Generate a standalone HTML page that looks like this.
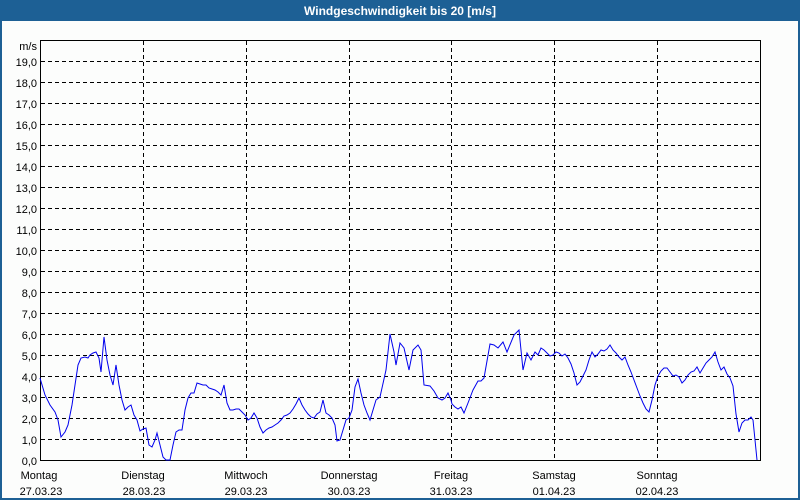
<!DOCTYPE html>
<html><head><meta charset="utf-8"><style>
html,body{margin:0;padding:0;width:800px;height:500px;overflow:hidden;background:#fcfdfc;font-family:"Liberation Sans","DejaVu Sans",sans-serif;}
</style></head><body>
<svg width="800" height="500" xmlns="http://www.w3.org/2000/svg" style="display:block">
<rect x="0" y="0" width="800" height="500" fill="#fcfdfc"/>
<rect x="0" y="0" width="800" height="21" fill="#1d6095"/>
<rect x="0" y="0" width="2" height="500" fill="#1d6095"/>
<rect x="798" y="0" width="2" height="500" fill="#1d6095"/>
<rect x="0" y="498" width="800" height="2" fill="#1d6095"/>
<text x="400" y="15" text-anchor="middle" font-size="12" font-weight="bold" fill="#fff" font-family="Liberation Sans, sans-serif">Windgeschwindigkeit bis 20 [m/s]</text>
<g stroke="#000" stroke-width="1" stroke-dasharray="4,3" shape-rendering="crispEdges">
<path d="M41 61.5H760M41 82.5H760M41 103.5H760M41 124.5H760M41 145.5H760M41 166.5H760M41 187.5H760M41 208.5H760M41 229.5H760M41 250.5H760M41 271.5H760M41 292.5H760M41 313.5H760M41 334.5H760M41 355.5H760M41 376.5H760M41 397.5H760M41 418.5H760M41 439.5H760"/>
<path d="M143.5 41V460M246.5 41V460M349.5 41V460M451.5 41V460M554.5 41V460M657.5 41V460"/>
</g>
<rect x="40.5" y="40.5" width="720" height="420" fill="none" stroke="#000" stroke-width="1" shape-rendering="crispEdges"/>
<g font-size="11" fill="#000" text-anchor="end">
<text x="37" y="50">m/s</text>
<text x="37" y="66">19,0</text><text x="37" y="87">18,0</text><text x="37" y="108">17,0</text><text x="37" y="129">16,0</text><text x="37" y="150">15,0</text><text x="37" y="171">14,0</text><text x="37" y="192">13,0</text><text x="37" y="213">12,0</text><text x="37" y="234">11,0</text><text x="37" y="255">10,0</text><text x="37" y="276">9,0</text><text x="37" y="297">8,0</text><text x="37" y="318">7,0</text><text x="37" y="339">6,0</text><text x="37" y="360">5,0</text><text x="37" y="381">4,0</text><text x="37" y="402">3,0</text><text x="37" y="423">2,0</text><text x="37" y="444">1,0</text><text x="37" y="465">0,0</text>
</g>
<g font-size="11" fill="#000" text-anchor="middle">
<text x="39" y="479">Montag</text><text x="41" y="495">27.03.23</text>
<text x="143" y="479">Dienstag</text><text x="144" y="495">28.03.23</text>
<text x="246" y="479">Mittwoch</text><text x="246" y="495">29.03.23</text>
<text x="349" y="479">Donnerstag</text><text x="349" y="495">30.03.23</text>
<text x="451" y="479">Freitag</text><text x="451" y="495">31.03.23</text>
<text x="554" y="479">Samstag</text><text x="554" y="495">01.04.23</text>
<text x="657" y="479">Sonntag</text><text x="657" y="495">02.04.23</text>
</g>
<polyline fill="none" stroke="#0000ee" stroke-width="1" points="40,378 45,395 50,405 55,412 58,420 61,437 65,432 68,425 72,405 75,385 78,365 81,358 85,357 88,358 90,355 93,353 96,352 99,358 101,372 104,337 107,360 110,375 113,385 116,365 119,385 122,400 125,410 128,407 131,405 134,415 137,420 140,431 143,429 146,428 149,445 152,447 155,440 157,433 160,445 163,457 166,460 170,460 173,445 176,432 179,430 182,430 185,410 188,398 191,393 194,393 197,383 200,384 203,385 206,385 209,388 212,389 215,390 218,392 221,395 224,385 227,403 230,410 233,410 236,409 239,409 242,412 245,415 248,420 251,418 254,413 257,418 260,427 263,433 266,430 269,428 272,427 275,425 278,423 281,420 284,416 287,415 290,413 293,409 296,404 299,398 302,405 305,410 308,414 311,417 314,418 317,414 320,412 323,400 326,413 329,415 332,418 335,425 337,441 340,440 343,430 346,420 349,418 352,410 355,387 358,379 361,393 364,405 367,413 370,420 373,410 376,400 380,397 386,370 390,334 394,352 396,365 400,343 404,348 409,370 413,350 418,345 421,350 424,385 430,386 434,391 438,398 442,400 445,398 448,393 451,400 452,404 455,407 458,409 461,407 464,413 468,403 473,390 478,381 481,381 484,378 490,344 494,345 498,348 503,342 507,352 514,335 519,330 523,370 527,353 531,360 535,352 538,355 541,348 544,350 547,353 550,356 553,355 556,352 559,353 562,356 565,354 568,358 571,364 574,373 577,385 580,382 583,376 586,370 589,360 592,352 595,357 598,354 601,350 604,351 607,349 610,345 613,350 616,353 619,357 622,360 625,357 628,365 631,372 634,380 637,388 640,396 643,403 646,409 649,412 652,400 655,385 658,376 661,371 664,368 667,368 670,372 673,376 676,375 679,377 682,383 685,380 688,375 691,372 694,371 697,367 700,373 703,368 706,363 709,360 712,357 715,352 718,362 721,370 724,367 727,374 730,378 733,386 736,414 739,432 742,423 745,420 748,420 751,417 753,420 755,440 757,460"/>
</svg>
</body></html>
